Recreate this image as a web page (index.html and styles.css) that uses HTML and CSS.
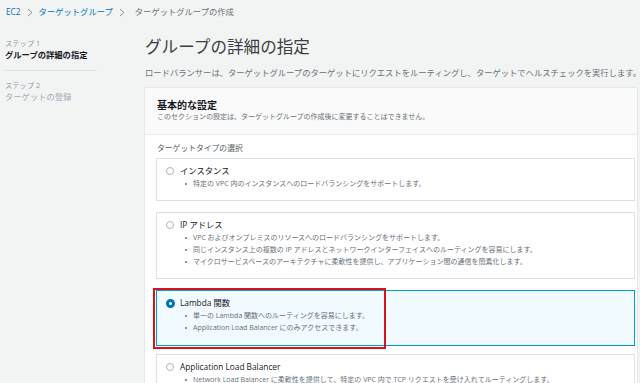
FILE: index.html
```html
<!DOCTYPE html>
<html lang="ja">
<head>
<meta charset="utf-8">
<link rel="stylesheet" href="styles.css">
</head>
<body>
<nav class="crumbs">
  <a class="crumb-link">EC2</a>
  <svg class="chev" width="6" height="9" viewBox="0 0 6 9"><path d="M1 1 L5 4.5 L1 8" fill="none" stroke="#879596" stroke-width="1"/></svg>
  <a class="crumb-link">ターゲットグループ</a>
  <svg class="chev" width="6" height="9" viewBox="0 0 6 9"><path d="M1 1 L5 4.5 L1 8" fill="none" stroke="#879596" stroke-width="1"/></svg>
  <span class="crumb-current">ターゲットグループの作成</span>
</nav>
<div class="layout">
  <aside class="steps">
    <div class="step step-active">
      <div class="step-num">ステップ 1</div>
      <div class="step-title">グループの詳細の指定</div>
    </div>
    <div class="step">
      <div class="step-num">ステップ 2</div>
      <div class="step-title">ターゲットの登録</div>
    </div>
  </aside>
  <main class="main">
    <h1 class="title">グループの詳細の指定</h1>
    <p class="desc">ロードバランサーは、ターゲットグループのターゲットにリクエストをルーティングし、ターゲットでヘルスチェックを実行します。</p>
    <section class="panel">
      <header class="panel-head">
        <h2 class="panel-title">基本的な設定</h2>
        <p class="panel-sub">このセクションの設定は、ターゲットグループの作成後に変更することはできません。</p>
      </header>
      <div class="panel-body">
        <div class="field-label">ターゲットタイプの選択</div>
        <div class="tile">
          <div class="tile-head"><span class="radio"></span><span class="tile-label">インスタンス</span></div>
          <ul class="tile-list">
            <li>特定の VPC 内のインスタンスへのロードバランシングをサポートします。</li>
          </ul>
        </div>
        <div class="tile">
          <div class="tile-head"><span class="radio"></span><span class="tile-label">IP アドレス</span></div>
          <ul class="tile-list">
            <li>VPC およびオンプレミスのリソースへのロードバランシングをサポートします。</li>
            <li>同じインスタンス上の複数の IP アドレスとネットワークインターフェイスへのルーティングを容易にします。</li>
            <li>マイクロサービスベースのアーキテクチャに柔軟性を提供し、アプリケーション間の通信を簡素化します。</li>
          </ul>
        </div>
        <div class="tile tile-selected">
          <div class="tile-head"><span class="radio radio-on"></span><span class="tile-label">Lambda 関数</span></div>
          <ul class="tile-list">
            <li>単一の Lambda 関数へのルーティングを容易にします。</li>
            <li>Application Load Balancer にのみアクセスできます。</li>
          </ul>
          <div class="highlight"></div>
        </div>
        <div class="tile">
          <div class="tile-head"><span class="radio"></span><span class="tile-label">Application Load Balancer</span></div>
          <ul class="tile-list">
            <li>Network Load Balancer に柔軟性を提供して、特定の VPC 内で TCP リクエストを受け入れてルーティングします。</li>
          </ul>
        </div>
      </div>
    </section>
  </main>
</div>
</body>
</html>
```

FILE: styles.css
```css
* { box-sizing: border-box; }
html, body { margin: 0; padding: 0; }
body {
  width: 640px;
  height: 383px;
  overflow: hidden;
  background: #f2f3f3;
  font-family: "Open Sans", "Noto Sans CJK JP", sans-serif;
  color: #16191f;
}
.crumbs {
  height: 24px;
  padding-left: 6px;
  display: flex;
  align-items: center;
  gap: 6px;
  font-size: 8.3px;
  line-height: 24px;
}
.crumb-link { color: #0073bb; }
.crumb-current { color: #687078; margin-left: 4px; }
.chev { display: block; }

.layout { display: flex; }
.steps {
  width: 144px;
  flex: none;
  padding: 14px 0 0 5px;
}
.step-num {
  font-size: 7.3px;
  line-height: 11px;
  color: #8d99a8;
}
.step-title {
  font-size: 8.3px;
  line-height: 12px;
  color: #a2adb9;
}
.step-active { width: 92px; border-bottom: 1px solid #dde1e4; padding-bottom: 9px; margin-bottom: 9px; }
.step-active .step-title { font-weight: 700; color: #16191f; }

.main { flex: 1; min-width: 0; padding-right: 2px; }
.title {
  margin: 11px 0 0 1px;
  font-size: 16.6px;
  line-height: 24px;
  font-weight: 400;
  color: #3a3f45;
}
.desc {
  margin: 8px 0 0 1px;
  font-size: 8.3px;
  line-height: 12px;
  color: #687078;
  white-space: nowrap;
}
.panel {
  margin-top: 8px;
  background: #fff;
  border: 1px solid #e6e9eb;
}
.panel-head {
  background: #fafafa;
  border-bottom: 1px solid #eaeded;
  padding: 10px 12px 12px 12px;
}
.panel-title {
  margin: 0;
  font-size: 10px;
  line-height: 14px;
  font-weight: 700;
  color: #16191f;
}
.panel-sub {
  margin: 0;
  font-size: 7px;
  line-height: 10px;
  color: #687078;
}
.panel-body { padding: 7px 2px 0 11px; }
.field-label {
  padding-left: 1px;
  font-size: 7.8px;
  line-height: 12px;
  color: #545b64;
  margin-bottom: 4px;
}
.tile {
  position: relative;
  border: 1px solid #dde1e4;
  background: #fff;
  padding: 6px 8px 10px 9px;
  margin-bottom: 11px;
}
.tile-head {
  display: flex;
  align-items: center;
  height: 12px;
}
.radio {
  width: 8px;
  height: 8px;
  border-radius: 50%;
  border: 1px solid #aab7b8;
  background: #fff;
  flex: none;
  margin-right: 6px;
}
.radio-on {
  width: 9px;
  height: 9px;
  border: 3px solid #0073bb;
  margin-right: 5px;
}
.tile-label {
  font-size: 8.3px;
  line-height: 12px;
  color: #16191f;
}
.tile-list {
  list-style: none;
  margin: 1px 0 0 0;
  padding: 0 0 0 18px;
}
.tile-list li {
  position: relative;
  padding-left: 9px;
  font-size: 7px;
  line-height: 12px;
  color: #687078;
  white-space: nowrap;
}
.tile-list li::before {
  content: "";
  position: absolute;
  left: 1px;
  top: 5px;
  width: 2px;
  height: 2px;
  border-radius: 50%;
  background: #687078;
}
.tile-selected {
  background: #f1faff;
  border-color: #00a1c9;
  padding-bottom: 11px;
  margin-bottom: 8px;
}
.highlight {
  position: absolute;
  top: -3px;
  left: -4px;
  width: 233px;
  height: 61px;
  border: 2px solid #d9121f;
}
```
